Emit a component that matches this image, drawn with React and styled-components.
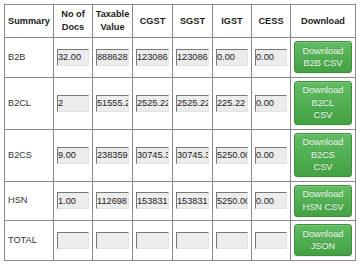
import styled, { createGlobalStyle } from "styled-components"

const GlobalStyle = createGlobalStyle`
  html, body {
    margin: 0;
    padding: 0;
    background: #fff;
  }
  body {
    font-family: "Liberation Sans", Arial, sans-serif;
    font-size: 9.2px;
    color: #333;
  }
`

const Wrapper = styled.div`
  padding: 4px 0 0 4px;
`

const Grid = styled.div`
  display: grid;
  grid-template-columns: 49px 39px 40px 40px 40px 39px 39px 65px;
  width: 352px;
  box-sizing: border-box;
  border-left: 1px solid #8a8a8a;
  border-top: 1px solid #8a8a8a;
`

const Cell = styled.div`
  box-sizing: border-box;
  display: flex;
  align-items: center;
  border-right: 1px solid #8a8a8a;
  border-bottom: 1px solid #8a8a8a;
  padding: 3.25px 3px;
  line-height: 13px;
  min-width: 0;
`

const HeadCell = styled(Cell)`
  justify-content: ${({ $left }) => ($left ? "flex-start" : "center")};
  text-align: center;
  padding: 3px 2px 3px ${({ $left }) => ($left ? "3px" : "2px")};
  min-height: 33px;
  font-weight: bold;
  color: #222;
`

const LabelCell = styled(Cell)`
  color: #333;
`

const Field = styled.input`
  box-sizing: border-box;
  width: ${({ $w }) => $w || 32}px;
  height: 17px;
  margin: 0;
  padding: 0;
  font-family: "Liberation Sans", Arial, sans-serif;
  font-size: 9.2px;
  color: #222;
  background: #ececec;
  border: 1px solid;
  border-color: #777 #e2e2e2 #e2e2e2 #777;
  border-radius: 0;
  outline: none;
`

const DownloadButton = styled.button`
  box-sizing: border-box;
  width: 100%;
  margin: 0;
  padding: 2.5px 2px;
  font-family: "Liberation Sans", Arial, sans-serif;
  font-size: 9.2px;
  line-height: 12.5px;
  color: #eef8ee;
  text-align: center;
  background-image: linear-gradient(to bottom, #62bd62 0, #43a043 100%);
  border: 1px solid #3e8f3e;
  border-radius: 3px;
  text-shadow: 0 -1px 0 rgba(0, 0, 0, 0.15);
  box-shadow: inset 0 1px 0 rgba(255, 255, 255, 0.15), 0 1px 1px rgba(0, 0, 0, 0.075);
  cursor: pointer;
`

const Line = styled.span`
  display: block;
`

const headers = [
  ["Summary"],
  ["No of", "Docs"],
  ["Taxable", "Value"],
  ["CGST"],
  ["SGST"],
  ["IGST"],
  ["CESS"],
  ["Download"],
]

const rows = [
  { name: "B2B", values: ["32.00", "888628", "123086", "123086", "0.00", "0.00"], button: ["Download", "B2B CSV"] },
  { name: "B2CL", values: ["2", "51555.22", "2525.22", "2525.22", "225.22", "0.00"], button: ["Download", "B2CL", "CSV"] },
  { name: "B2CS", values: ["9.00", "238359", "30745.31", "30745.31", "5250.00", "0.00"], button: ["Download", "B2CS", "CSV"] },
  { name: "HSN", values: ["1.00", "112698", "153831", "153831", "5250.00", "0.00"], button: ["Download", "HSN CSV"] },
  { name: "TOTAL", values: ["", "", "", "", "", ""], button: ["Download", "JSON"] },
]

const fieldWidths = [32, 33, 33, 33, 32, 32]

export default function App() {
  return (
    <>
      <GlobalStyle />
      <Wrapper>
        <Grid>
          {headers.map((lines, i) => (
            <HeadCell key={i} $left={i === 0}>
              <div>
                {lines.map((l) => (
                  <Line key={l}>{l}</Line>
                ))}
              </div>
            </HeadCell>
          ))}
          {rows.map((r) => [
            <LabelCell key={r.name}>{r.name}</LabelCell>,
            ...r.values.map((v, i) => (
              <Cell key={r.name + i}>
                <Field type="text" defaultValue={v} readOnly $w={fieldWidths[i]} />
              </Cell>
            )),
            <Cell key={r.name + "btn"}>
              <DownloadButton>
                {r.button.map((l) => (
                  <Line key={l}>{l}</Line>
                ))}
              </DownloadButton>
            </Cell>,
          ])}
        </Grid>
      </Wrapper>
    </>
  )
}
